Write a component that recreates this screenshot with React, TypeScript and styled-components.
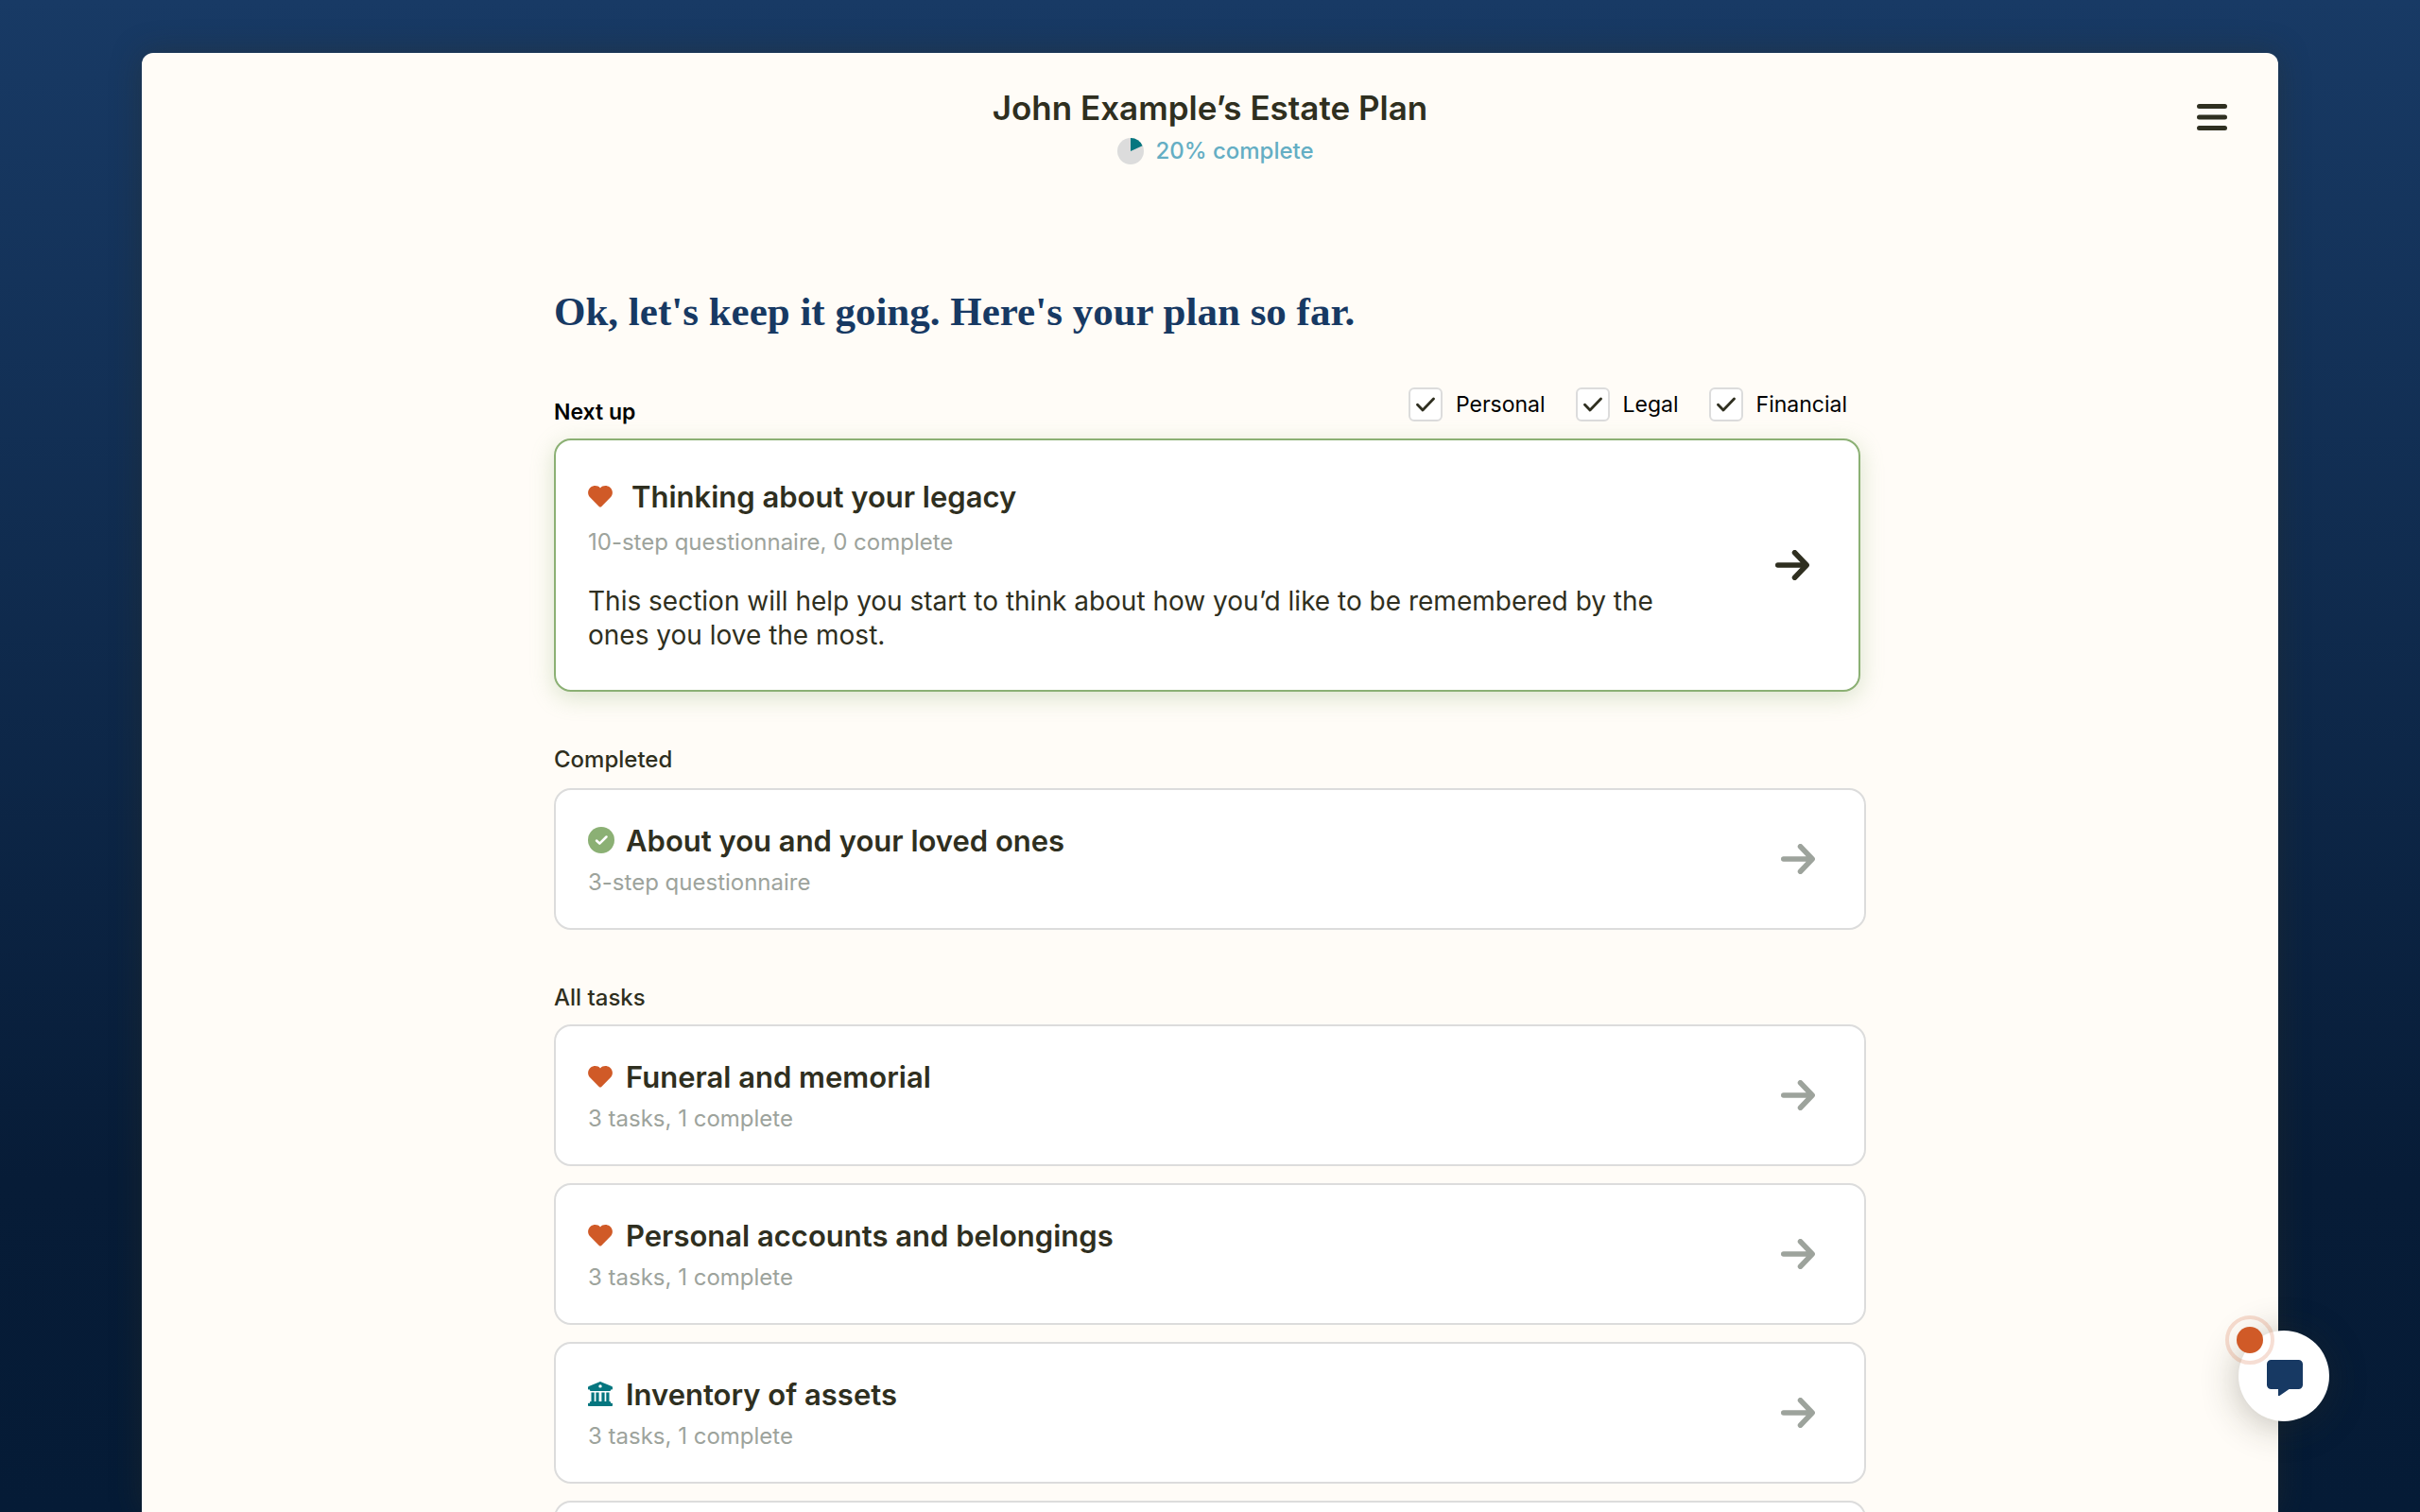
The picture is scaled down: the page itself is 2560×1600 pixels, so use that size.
import React, { useId, useState } from "react";
import styled, { createGlobalStyle } from "styled-components";

const color = {
  ink: "#2f2f20",
  navy: "#173963",
  cream: "#fffcf7",
  grey: "#9da39c",
  line: "#dcdcdc",
  green: "#8bb074",
  orange: "#d05a27",
  teal: "#05767f",
  sky: "#64aec4",
};

const GlobalStyle = createGlobalStyle`
  *, *::before, *::after { box-sizing: border-box; }
  body {
    margin: 0;
    color: ${color.ink};
    font-family: Inter, "Liberation Sans", sans-serif;
  }
  h1, h2, h3, p, ul { margin: 0; padding: 0; }
  ul { list-style: none; }
`;

const Page = styled.div`
  display: flex;
  justify-content: center;
  height: 100vh;
  padding: 56px 150px 0;
  overflow: hidden;
  background: linear-gradient(180deg, #183a65 0%, #071c37 78%, #051b36 100%);
`;

const Panel = styled.div`
  position: relative;
  flex: 1;
  padding: 36px 48px 0;
  border-radius: 12px 12px 0 0;
  background: ${color.cream};
  box-shadow: 0 0 32px rgba(47, 47, 32, 0.4);
`;

const Header = styled.header`
  display: flex;
  flex-direction: column;
  align-items: center;
  gap: 10px;
`;

const PlanTitle = styled.h1`
  font-size: 35px;
  line-height: 44px;
  font-weight: 600;
`;

const Progress = styled.p`
  display: flex;
  align-items: center;
  gap: 12px;
  padding-left: 12px;
  color: ${color.sky};
  font-size: 24px;
  line-height: 28px;
  font-weight: 500;
`;

const MenuButton = styled.button`
  position: absolute;
  top: 48px;
  right: 48px;
  display: grid;
  place-items: center;
  width: 44px;
  height: 40px;
  padding: 0;
  border: 0;
  background: none;
  color: ${color.ink};
  cursor: pointer;
`;

const Main = styled.main`
  display: flex;
  flex-direction: column;
  width: 100%;
  max-width: 1388px;
  margin: 130px auto 0;
`;

const Greeting = styled.h2`
  color: ${color.navy};
  font-family: "Liberation Serif", "Times New Roman", serif;
  font-size: 43px;
  line-height: 52px;
  font-weight: 700;
`;

const Toolbar = styled.div`
  display: flex;
  justify-content: space-between;
  min-height: 40px;
  margin: 54px 0 14px;
  padding-right: 20px;
`;

const SectionLabel = styled.h3<{ $strong?: boolean }>`
  align-self: flex-end;
  color: ${(p) => (p.$strong ? "#000" : color.ink)};
  font-size: ${(p) => (p.$strong ? 23 : 24)}px;
  line-height: 28px;
  font-weight: ${(p) => (p.$strong ? 600 : 500)};
`;

const Filters = styled.div`
  display: flex;
  align-items: flex-start;
  gap: 32px;
`;

const FilterLabel = styled.label`
  display: flex;
  align-items: center;
  gap: 14px;
  color: #000;
  font-size: 23px;
  line-height: 36px;
  cursor: pointer;
`;

const Tick = styled.span`
  display: grid;
  width: 36px;
  height: 36px;

  > * { grid-area: 1 / 1; }
  > svg { place-self: center; pointer-events: none; }
`;

const TickInput = styled.input`
  width: 36px;
  height: 36px;
  margin: 0;
  appearance: none;
  border: 2px solid ${color.line};
  border-radius: 6px;
  background: #fff;
  cursor: pointer;

  &:not(:checked) + svg { visibility: hidden; }
`;

const Card = styled.a<{ $featured?: boolean }>`
  display: flex;
  align-items: center;
  justify-content: space-between;
  gap: 32px;
  min-height: 150px;
  margin-right: ${(p) => (p.$featured ? 6 : 0)}px;
  padding: ${(p) => (p.$featured ? 40 : 34)}px 52px ${(p) => (p.$featured ? 40 : 34)}px 34px;
  border: 2px solid ${(p) => (p.$featured ? color.green : color.line)};
  border-radius: 18px;
  background: #fff;
  box-shadow: ${(p) => (p.$featured ? "0 6px 24px rgba(139, 176, 116, 0.32)" : "none")};
  color: ${(p) => (p.$featured ? color.ink : color.grey)};
  text-decoration: none;
`;

const CardText = styled.div`
  min-width: 0;
`;

const CardTitle = styled.h3<{ $gap: number }>`
  display: flex;
  align-items: center;
  gap: ${(p) => p.$gap}px;
  color: ${color.ink};
  font-size: 31px;
  line-height: 40px;
  font-weight: 600;
`;

const IconSlot = styled.span`
  display: grid;
  place-items: center start;
  width: 28px;
  height: 34px;
  padding-bottom: 2px;
`;

const CardMeta = styled.p<{ $featured?: boolean }>`
  margin-top: ${(p) => (p.$featured ? 14 : 10)}px;
  color: ${color.grey};
  font-size: 24px;
  line-height: 28px;
`;

const CardBody = styled.p`
  max-width: 1140px;
  margin-top: 30px;
  font-size: 28px;
  line-height: 36px;
`;

const Section = styled.section<{ $gap: number }>`
  display: flex;
  flex-direction: column;
  gap: ${(p) => p.$gap}px;
  margin-top: 58px;

  > ${SectionLabel} { align-self: flex-start; }
`;

const CardList = styled.ul`
  display: flex;
  flex-direction: column;
  gap: 18px;
`;

const ChatButton = styled.button`
  position: fixed;
  right: 96px;
  bottom: 96px;
  display: grid;
  place-items: center;
  width: 96px;
  height: 96px;
  padding: 4px 0 0 2px;
  border: 0;
  border-radius: 50%;
  background: #fff;
  box-shadow: 0 4px 40px rgba(47, 47, 32, 0.32);
  color: ${color.navy};
  cursor: pointer;
`;

const ChatBadge = styled.span`
  position: absolute;
  top: -16px;
  left: -14px;
  display: grid;
  place-items: center;
  width: 52px;
  height: 52px;
  border: 4px solid rgba(208, 90, 39, 0.2);
  border-radius: 50%;

  &::before {
    content: "";
    width: 28px;
    height: 28px;
    border-radius: 50%;
    background: ${color.orange};
  }
`;

const HeartIcon = () => (
  <svg width="26" height="23" viewBox="0 0 26 23" fill={color.orange} aria-hidden="true">
    <path d="M13 2.4C10.6-.5 6-.7 3 1.500C-.5 4.200-.8 9 1.900 12L11.700 22C12.500 22.800 13.500 22.800 14.300 22L24.100 12C26.800 9 26.500 4.200 23 1.500C20-.7 15.400-.5 13 2.400Z" />
  </svg>
);

const DoneIcon = () => (
  <svg width="28" height="28" viewBox="0 0 28 28" aria-hidden="true">
    <circle cx="14" cy="14" r="14" fill={color.green} />
    <path d="M9 14.500L12.300 17.700L19.500 10.500" fill="none" stroke="#fff" strokeWidth="2.500" strokeLinecap="round" strokeLinejoin="round" />
  </svg>
);

const BankIcon = () => (
  <svg width="26" height="26" viewBox="0 0 26 26" aria-hidden="true">
    <path
      fill={color.teal}
      fillRule="evenodd"
      d="M12.400.2C12.800 0 13.200 0 13.600.2L25.200 4.900C25.800 5.200 26 5.600 26 6.200V7.400C26 8 25.600 8.400 25 8.400H24V9.200C24 9.600 23.600 10 23.200 10H2.800C2.400 10 2 9.600 2 9.200V8.400H1C.4 8.400 0 8 0 7.400V6.200C0 5.600.2 5.200.8 4.900ZM13 3.200A1.700 1.700 0 1 0 13 6.600A1.700 1.700 0 1 0 13 3.200Z"
    />
    <path fill={color.teal} d="M3.500 11.400H6.700V21H8.400V11.400H11.600V21H14.400V11.400H17.600V21H19.300V11.400H22.500V21H23.200C23.700 21 24 21.400 24 21.800V22.800H25C25.600 22.800 26 23.200 26 23.800V25C26 25.600 25.600 26 25 26H1C.4 26 0 25.600 0 25V23.800C0 23.200.4 22.800 1 22.800H2V21.800C2 21.400 2.300 21 2.800 21H3.500Z" />
  </svg>
);

const ArrowIcon = () => (
  <svg width="36" height="32" viewBox="0 0 36 32" fill="none" stroke="currentColor" strokeWidth="5.500" strokeLinecap="round" strokeLinejoin="round" aria-hidden="true">
    <path d="M2.750 16H33M20.500 2.750L33.200 16L20.500 29.250" />
  </svg>
);

const MenuIcon = () => (
  <svg width="32" height="28" viewBox="0 0 32 28" stroke="currentColor" strokeWidth="5" strokeLinecap="round" aria-hidden="true">
    <path d="M2.500 2.500H29.500M2.500 14H29.500M2.500 25.500H29.500" />
  </svg>
);

const PieIcon = () => (
  <svg width="28" height="28" viewBox="0 0 28 28" aria-hidden="true">
    <circle cx="14" cy="14" r="14" fill={color.line} />
    <path d="M14 14V0A14 14 0 0 1 26.500 8.200Z" fill={color.teal} />
  </svg>
);

const TickIcon = () => (
  <svg width="20" height="16" viewBox="0 0 20 16" fill="none" stroke={color.ink} strokeWidth="2.800" strokeLinecap="round" strokeLinejoin="round" aria-hidden="true">
    <path d="M1.500 8.300L7 14L18.500 2" />
  </svg>
);

const ChatIcon = () => (
  <svg width="38" height="38" viewBox="0 0 38 38" fill="currentColor" aria-hidden="true">
    <path d="M4.500 0H33.500A4.500 4.500 0 0 1 38 4.500V26.500A4.500 4.500 0 0 1 33.500 31H23.500L13.400 38C12.600 38.400 12 38.200 12 37.500V31H4.500A4.500 4.500 0 0 1 0 26.500V4.500A4.500 4.500 0 0 1 4.500 0Z" />
  </svg>
);

const icons = { heart: HeartIcon, done: DoneIcon, bank: BankIcon };

type TaskCardProps = {
  icon: keyof typeof icons;
  title: string;
  meta: string;
  body?: string;
  featured?: boolean;
};

function TaskCard({ icon, title, meta, body, featured }: TaskCardProps) {
  const Icon = icons[icon];
  return (
    <Card href="#" $featured={featured}>
      <CardText>
        <CardTitle $gap={featured ? 18 : 12}>
          <IconSlot>
            <Icon />
          </IconSlot>
          {title}
        </CardTitle>
        <CardMeta $featured={featured}>{meta}</CardMeta>
        {body && <CardBody>{body}</CardBody>}
      </CardText>
      <ArrowIcon />
    </Card>
  );
}

function Filter({ name }: { name: string }) {
  const id = useId();
  const [checked, setChecked] = useState(true);
  return (
    <FilterLabel htmlFor={id}>
      <Tick>
        <TickInput id={id} type="checkbox" checked={checked} onChange={() => setChecked(!checked)} />
        <TickIcon />
      </Tick>
      {name}
    </FilterLabel>
  );
}

const filters = ["Personal", "Legal", "Financial"];

const tasks: TaskCardProps[] = [
  { icon: "heart", title: "Funeral and memorial", meta: "3 tasks, 1 complete" },
  { icon: "heart", title: "Personal accounts and belongings", meta: "3 tasks, 1 complete" },
  { icon: "bank", title: "Inventory of assets", meta: "3 tasks, 1 complete" },
];

export default function App() {
  return (
    <Page>
      <GlobalStyle />
      <Panel>
        <Header>
          <PlanTitle>John Example’s Estate Plan</PlanTitle>
          <Progress>
            <PieIcon />
            20% complete
          </Progress>
          <MenuButton type="button" aria-label="Menu">
            <MenuIcon />
          </MenuButton>
        </Header>
        <Main>
          <Greeting>Ok, let's keep it going. Here's your plan so far.</Greeting>
          <Toolbar>
            <SectionLabel $strong>Next up</SectionLabel>
            <Filters>
              {filters.map((name) => (
                <Filter key={name} name={name} />
              ))}
            </Filters>
          </Toolbar>
          <TaskCard
            featured
            icon="heart"
            title="Thinking about your legacy"
            meta="10-step questionnaire, 0 complete"
            body="This section will help you start to think about how you’d like to be remembered by the ones you love the most."
          />
          <Section $gap={16}>
            <SectionLabel>Completed</SectionLabel>
            <TaskCard icon="done" title="About you and your loved ones" meta="3-step questionnaire" />
          </Section>
          <Section $gap={14}>
            <SectionLabel>All tasks</SectionLabel>
            <CardList>
              {tasks.map((task) => (
                <li key={task.title}>
                  <TaskCard {...task} />
                </li>
              ))}
              <li>
                <Card as="div" />
              </li>
            </CardList>
          </Section>
        </Main>
      </Panel>
      <ChatButton type="button" aria-label="Open chat">
        <ChatIcon />
        <ChatBadge />
      </ChatButton>
    </Page>
  );
}
